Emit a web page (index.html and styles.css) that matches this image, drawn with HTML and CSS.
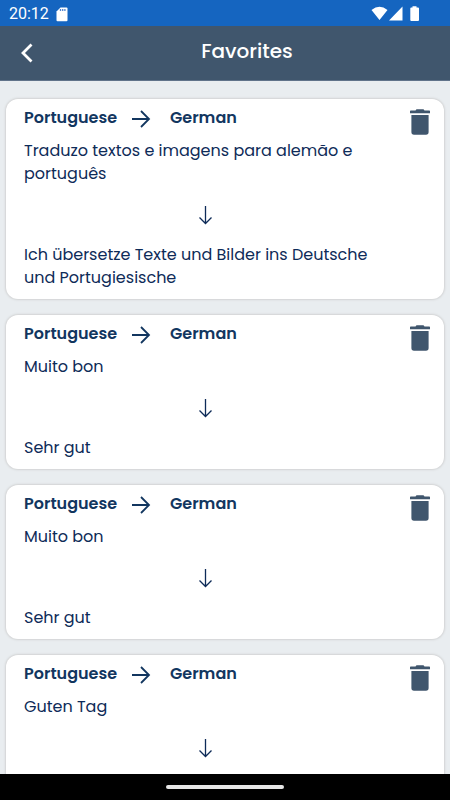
FILE: index.html
```html
<!DOCTYPE html>
<html lang="en">
<head>
<meta charset="utf-8">
<meta name="viewport" content="width=device-width, initial-scale=1">
<title>Favorites</title>
<link rel="stylesheet" href="styles.css">
</head>
<body>
<svg class="symbols" aria-hidden="true">
  <symbol id="right" viewBox="0 0 20 20"><path d="M1 11H18M10 3L18 11L10 19" fill="none" stroke="currentColor" stroke-width="1.800"/></symbol>
  <symbol id="down" viewBox="0 0 14 20"><path d="M7.500 1V18.500M1.500 12.500L7.500 18.500L13.500 12.500" fill="none" stroke="currentColor" stroke-width="1.300"/></symbol>
  <symbol id="trash" viewBox="0 0 20 26"><path d="M0 2.200Q0 1.500 .7 1.500H5.500L6.500 .3H13.500L14.500 1.500H19.300Q20 1.500 20 2.200V4.300H0ZM1.400 6H18.600V23Q18.600 25.700 16 25.700H4Q1.400 25.700 1.400 23Z" fill="currentColor"/></symbol>
</svg>
<div class="status">
  <span class="time">20:12</span>
  <svg class="sd" viewBox="0 0 12 15"><path d="M4.500 .5H10.500Q11.500 .5 11.500 1.500V13.300Q11.500 14.300 10.500 14.300H1.500Q.5 14.300 .5 13.300V4.500Z" fill="#fff"/><path d="M4.500 2V4M6.700 2V4M8.900 2V4" stroke="#4f83d0" stroke-width="1.300"/></svg>
  <svg class="signals" viewBox="0 0 50 16"><path d="M.5 4Q8.500-2.500 16.500 4L8.500 14ZM31.500 .5V14.500H18ZM41.500 1.500V.2H45.500V1.500H47Q48 1.500 48 2.500V14Q48 15 47 15H40.300Q39.300 15 39.300 14V2.500Q39.300 1.500 40.300 1.500Z" fill="#fff"/></svg>
</div>
<header class="bar">
  <button class="back" aria-label="Back"><svg viewBox="0 0 14 20"><path d="M11.500 1.500L3 10L11.500 18.500" fill="none" stroke="#fff" stroke-width="2.800"/></svg></button>
  <h1>Favorites</h1>
</header>
<main class="list">
  <article class="card">
    <div class="content">
      <h2 class="pair"><span>Portuguese</span><svg class="right"><use href="#right"/></svg><span>German</span></h2>
      <p>Traduzo textos e imagens para alemão e português</p>
      <svg class="down"><use href="#down"/></svg>
      <p>Ich übersetze Texte und Bilder ins Deutsche und Portugiesische</p>
    </div>
    <button class="delete" aria-label="Delete"><svg><use href="#trash"/></svg></button>
  </article>
  <article class="card">
    <div class="content">
      <h2 class="pair"><span>Portuguese</span><svg class="right"><use href="#right"/></svg><span>German</span></h2>
      <p>Muito bon</p>
      <svg class="down"><use href="#down"/></svg>
      <p>Sehr gut</p>
    </div>
    <button class="delete" aria-label="Delete"><svg><use href="#trash"/></svg></button>
  </article>
  <article class="card">
    <div class="content">
      <h2 class="pair"><span>Portuguese</span><svg class="right"><use href="#right"/></svg><span>German</span></h2>
      <p>Muito bon</p>
      <svg class="down"><use href="#down"/></svg>
      <p>Sehr gut</p>
    </div>
    <button class="delete" aria-label="Delete"><svg><use href="#trash"/></svg></button>
  </article>
  <article class="card">
    <div class="content">
      <h2 class="pair"><span>Portuguese</span><svg class="right"><use href="#right"/></svg><span>German</span></h2>
      <p>Guten Tag</p>
      <svg class="down"><use href="#down"/></svg>
    </div>
    <button class="delete" aria-label="Delete"><svg><use href="#trash"/></svg></button>
  </article>
</main>
<footer class="nav"><div class="handle"></div></footer>
</body>
</html>
```
FILE: styles.css
```css
* { box-sizing: border-box; }
body {
  margin: 0;
  height: 100vh;
  display: flex;
  flex-direction: column;
  overflow: hidden;
  background: #e9edf0;
  color: #0e2b58;
  font-family: Poppins, Inter, sans-serif;
}
button { border: 0; background: none; padding: 0; cursor: pointer; }
svg { display: block; flex: none; }
.symbols { position: absolute; width: 0; height: 0; }
.status {
  flex: none;
  display: flex;
  align-items: center;
  gap: 7px;
  height: 26px;
  padding: 2px 29px 0 9px;
  background: #1565c0;
  color: #fff;
  font: 16px/24px Roboto, sans-serif;
}
.sd { width: 12px; height: 15px; }
.signals { width: 50px; height: 16px; margin-left: auto; }
.bar {
  flex: none;
  display: grid;
  grid-template-columns: 44px 1fr;
  align-items: center;
  height: 55px;
  background: #40566d;
  border-bottom: 1px solid #60738a;
  color: #fff;
}
.back { display: flex; justify-content: flex-end; padding-right: 10px; }
.back svg { width: 14px; height: 20px; }
.bar h1 {
  margin: 0;
  padding-bottom: 4px;
  text-align: center;
  font-size: 20px;
  font-weight: 500;
  line-height: 24px;
}
.list {
  flex: 1;
  min-height: 0;
  overflow: hidden;
  display: flex;
  flex-direction: column;
  gap: 16px;
  padding: 18px 6px 0;
}
.card {
  flex: none;
  display: flex;
  align-items: flex-start;
  background: #fff;
  border-radius: 12px;
  box-shadow: 0 0 2px 1px #d2d3d4;
}
.content { flex: 1; padding: 7px 0 10px 18px; }
.pair {
  display: grid;
  grid-template-columns: 107px 39px 1fr;
  align-items: center;
  margin: 0 0 10px;
  color: #12365f;
  font-size: 16px;
  font-weight: 600;
  line-height: 23px;
}
.right { width: 20px; height: 20px; }
.content p { margin: 0; font-size: 16px; line-height: 23px; }
.down { width: 14px; height: 20px; margin: 20px auto 18px; }
.delete { padding: 10px 14px 0 24px; color: #40566d; }
.delete svg { width: 20px; height: 26px; }
.nav {
  flex: none;
  display: flex;
  align-items: center;
  justify-content: center;
  height: 26px;
  background: #000;
}
.handle { width: 118px; height: 4px; border-radius: 2px; background: #e6e6e6; }
```
